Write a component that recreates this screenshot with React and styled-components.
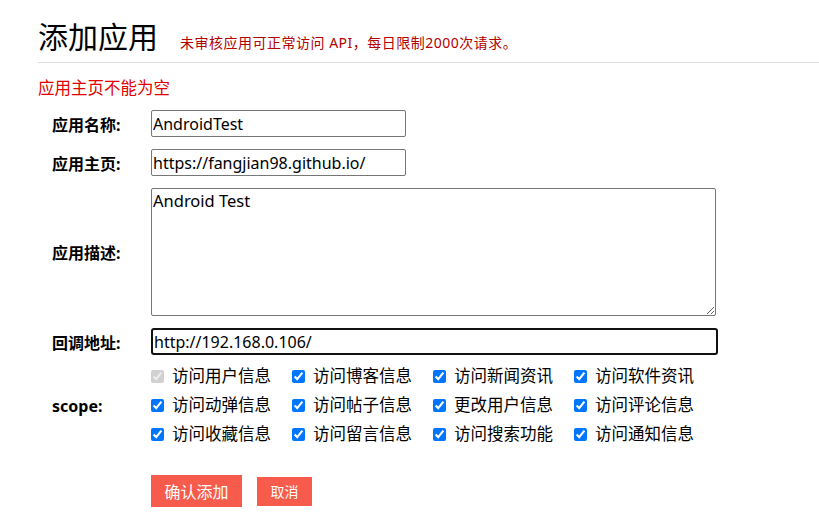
import styled, { createGlobalStyle } from "styled-components";

const GlobalStyle = createGlobalStyle`
  body {
    margin: 0;
    background: #fff;
    font-family: "Noto Sans", "Noto Sans CJK SC", sans-serif;
    color: #000;
  }
`;

const Page = styled.div`
  padding: 16px 0 0 38px;
`;

const Header = styled.div`
  display: flex;
  align-items: baseline;
  gap: 22px;
  padding-bottom: 4px;
  border-bottom: 1px solid #ddd;
`;

const Title = styled.h1`
  margin: 0;
  font-size: 30px;
  font-weight: normal;
  line-height: 42px;
`;

const Hint = styled.span`
  font-size: 14px;
  letter-spacing: 0.5px;
  color: #b30000;
`;

const Error = styled.div`
  margin-top: 14px;
  font-size: 16.5px;
  color: #e00000;
  line-height: 22px;
`;

const Form = styled.form`
  display: grid;
  grid-template-columns: 113px auto;
  row-gap: 12px;
  margin-top: 11px;
  align-items: center;
`;

const Label = styled.label`
  padding-left: 14px;
  font-size: 16px;
  font-weight: bold;
`;

const Input = styled.input`
  box-sizing: border-box;
  width: ${(p) => p.$w || 255}px;
  height: 27px;
  padding: 0 1px;
  font-family: inherit;
  font-size: 16px;
  color: #000;
  border: 1px solid ${(p) => (p.$focus ? "#111" : "#767676")};
  border-width: ${(p) => (p.$focus ? 2 : 1)}px;
  border-radius: ${(p) => (p.$focus ? 3 : 2)}px;
  outline: none;
`;

const TextArea = styled.textarea`
  box-sizing: border-box;
  width: 565px;
  height: 128px;
  padding: 0 1px;
  font-family: inherit;
  font-size: 16.5px;
  line-height: 24px;
  border: 1px solid #767676;
  border-radius: 2px;
`;

const ScopeGrid = styled.div`
  display: grid;
  grid-template-columns: repeat(4, 141px);
  row-gap: 7px;
  margin-top: -2px;
`;

const Check = styled.label`
  display: flex;
  align-items: center;
  gap: 8px;
  font-size: 16.5px;
  line-height: 22px;
  white-space: nowrap;

  input {
    margin: 0;
    width: 13px;
    height: 13px;
  }
`;

const Actions = styled.div`
  display: flex;
  align-items: center;
  gap: 15px;
  margin: 30px 0 0 113px;
`;

const Button = styled.button`
  border: none;
  border-radius: 0;
  background: #f65b4b;
  color: #fff;
  font-family: inherit;
  font-size: ${(p) => (p.$small ? 14 : 16)}px;
  padding: 0 13.5px;
  height: ${(p) => (p.$small ? 29 : 32)}px;
  cursor: pointer;
`;

const scopes = [
  ["访问用户信息", true],
  ["访问博客信息"],
  ["访问新闻资讯"],
  ["访问软件资讯"],
  ["访问动弹信息"],
  ["访问帖子信息"],
  ["更改用户信息"],
  ["访问评论信息"],
  ["访问收藏信息"],
  ["访问留言信息"],
  ["访问搜索功能"],
  ["访问通知信息"],
];

export default function App() {
  return (
    <Page>
      <GlobalStyle />
      <Header>
        <Title>添加应用</Title>
        <Hint>未审核应用可正常访问 API，每日限制2000次请求。</Hint>
      </Header>
      <Error>应用主页不能为空</Error>
      <Form onSubmit={(e) => e.preventDefault()}>
        <Label>应用名称:</Label>
        <Input defaultValue="AndroidTest" />
        <Label>应用主页:</Label>
        <Input defaultValue="https://fangjian98.github.io/" />
        <Label>应用描述:</Label>
        <TextArea defaultValue="Android Test" />
        <Label>回调地址:</Label>
        <Input $w={567} $focus defaultValue="http://192.168.0.106/" />
        <Label>scope:</Label>
        <ScopeGrid>
          {scopes.map(([name, disabled]) => (
            <Check key={name}>
              <input type="checkbox" defaultChecked disabled={disabled} />
              {name}
            </Check>
          ))}
        </ScopeGrid>
      </Form>
      <Actions>
        <Button>确认添加</Button>
        <Button $small type="button">取消</Button>
      </Actions>
    </Page>
  );
}
